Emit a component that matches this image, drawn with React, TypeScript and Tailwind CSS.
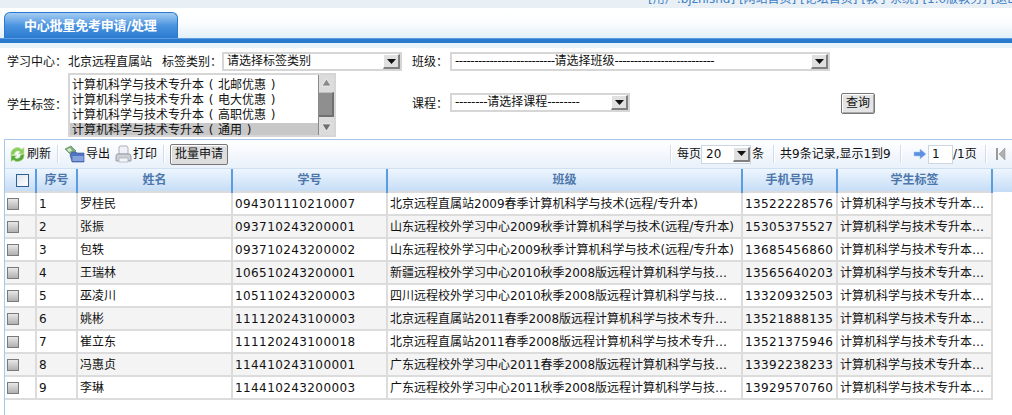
import type { ReactNode } from "react";

const font = "font-['DejaVu_Sans','Noto_Sans_CJK_SC',sans-serif]";

const rows = [
  ["1", "罗桂民", "094301110210007", "北京远程直属站2009春季计算机科学与技术(远程/专升本)", "13522228576"],
  ["2", "张振", "093710243200001", "山东远程校外学习中心2009秋季计算机科学与技术(远程/专升本)", "15305375527"],
  ["3", "包轶", "093710243200002", "山东远程校外学习中心2009秋季计算机科学与技术(远程/专升本)", "13685456860"],
  ["4", "王瑞林", "106510243200001", "新疆远程校外学习中心2010秋季2008版远程计算机科学与技术专升本", "13565640203"],
  ["5", "巫凌川", "105110243200003", "四川远程校外学习中心2010秋季2008版远程计算机科学与技术专升本", "13320932503"],
  ["6", "姚彬", "111120243100003", "北京远程直属站2011春季2008版远程计算机科学与技术专升本(远程)", "13521888135"],
  ["7", "崔立东", "111120243100018", "北京远程直属站2011春季2008版远程计算机科学与技术专升本(远程)", "13521375946"],
  ["8", "冯惠贞", "114410243100001", "广东远程校外学习中心2011春季2008版远程计算机科学与技术专升本", "13392238233"],
  ["9", "李琳", "114410243200003", "广东远程校外学习中心2011秋季2008版远程计算机科学与技术专升本", "13929570760"],
];

const headers = ["序号", "姓名", "学号", "班级", "手机号码", "学生标签"];

function Arrow() {
  return (
    <svg width="9" height="5" viewBox="0 0 9 5"><path d="M0 0h9L4.500 5z" fill="#111" /></svg>
  );
}

function Select({ w, children }: { w: string; children: ReactNode }) {
  return (
    <div className={`${w} h-[19px] flex border-2 border-[#d6d6d6] bg-white shrink-0 items-center`}>
      <span className="flex-1 pl-[3px] whitespace-nowrap overflow-hidden text-[#111]">{children}</span>
      <span className="w-[17px] h-[15px] bg-[#e0e0e0] border-t border-l border-t-white border-l-white border-b-2 border-r-2 border-b-[#808080] border-r-[#808080] flex items-center justify-center">
        <Arrow />
      </span>
    </div>
  );
}

function Sep({ className }: { className: string }) {
  return <span className={`w-px h-[18px] bg-[#d3dde8] border-r border-white box-content shrink-0 ${className}`} />;
}

function Dashes({ n }: { n: number }) {
  return <span className="tracking-[-0.5px]">{"-".repeat(n)}</span>;
}

function Paren({ c }: { c: string }) {
  return <span className="inline-block w-[14px] text-center">{c}</span>;
}

function ListItem({ name, selected }: { name: string; selected?: boolean }) {
  return (
    <div className={`pl-[2px] whitespace-nowrap ${selected ? "bg-[#c8c8c8] h-[16px]" : "h-[15px]"}`}>
      计算机科学与技术专升本<Paren c="(" />{name}<Paren c=")" />
    </div>
  );
}

function RefreshIcon() {
  return (
    <svg className="shrink-0" width="17" height="17" viewBox="0 0 17 17">
      <path d="M2 9.500A6.500 6.500 0 0 1 12.800 3.300L15 1.500V7.900H9L11.200 5.900A3.300 3.300 0 0 0 5.600 8.500Z" fill="#8ccc5c" stroke="#cfeab8" strokeWidth=".6" />
      <path d="M15 7.800A6.500 6.500 0 0 1 4.200 13.900L2 15.700V9.400H8L5.800 11.400A3.300 3.300 0 0 0 11.400 8.800Z" fill="#5aa838" stroke="#cfeab8" strokeWidth=".6" />
    </svg>
  );
}

function ExportIcon() {
  return (
    <svg className="shrink-0" width="21" height="18" viewBox="0 0 21 18">
      <path d="M1 4l6-3 5 5-5 4z" fill="#7fae7a" stroke="#4f7f50" strokeWidth=".6" />
      <path d="M3 4.500l3-1.500 2 2.500-3 1.500z" fill="#d8ecd2" />
      <path d="M6 10l2-3h4l1 1h7v9H8z" fill="#4f74c0" stroke="#3a5698" strokeWidth=".6" />
      <path d="M8.500 11h11v5h-11z" fill="#86a2dc" />
    </svg>
  );
}

function PrintIcon() {
  return (
    <svg className="shrink-0" width="17" height="18" viewBox="0 0 17 18">
      <path d="M5 1h7l1 2v6H4V2z" fill="#eef1f5" stroke="#9aa2ad" strokeWidth=".8" />
      <path d="M2 9h13l1 2v5H1v-5z" fill="#ccd1d7" stroke="#8a919a" strokeWidth=".8" />
      <path d="M4 13h9v4H4z" fill="#f4f5f6" stroke="#9aa2ad" strokeWidth=".6" />
    </svg>
  );
}

function RowCheck() {
  return <span className="block w-[12px] h-[12px] border border-[#7a7a7a] bg-gradient-to-b from-[#e8e8e8] to-[#b0b0b0]" />;
}

export default function App() {
  return (
    <div className={`${font} text-[12px] leading-[15px] text-[#111] w-[1012px] h-[415px] overflow-hidden bg-white`}>
      <div className="h-[8px] bg-[#e8f0f6] overflow-hidden relative">
        <div className="absolute left-[648px] top-[-8px] whitespace-nowrap text-[#3f7fc4]">[用户:bjzhlshd] [网站首页] [论坛首页] [教学系统] [1.0版教务] [退出]</div>
      </div>
      <div className="h-[30px] pl-[4px] flex items-end bg-gradient-to-b from-white via-[#fbfdfe] to-[#e2f0f9]">
        <div className="w-[174px] h-[26px] rounded-t-[6px] border border-b-0 border-[#2a7bd0] bg-gradient-to-b from-[#a6cdf2] via-[#4a94e0] to-[#2a7bd0] flex items-center pl-[19px] font-bold text-[13px] tracking-[-0.2px] whitespace-nowrap text-white">
          中心批量免考申请/处理
        </div>
      </div>
      <div className="h-[5px] bg-[#2a7bd0] border-t border-[#5b9be0]" />
      <div className="h-[5px] bg-[#e8f3fa]" />

      <div className="h-[91px] pt-[4px] pl-[7px]">
        <div className="flex items-center h-[19px]">
          <span className="w-[61px] pt-[1px] shrink-0">学习中心：</span>
          <span className="w-[94px] pt-[1px] shrink-0">北京远程直属站</span>
          <span className="w-[60px] pt-[1px] shrink-0">标签类别：</span>
          <Select w="w-[180px]">请选择标签类别</Select>
          <span className="ml-[10px] w-[38px] pt-[1px] shrink-0">班级：</span>
          <Select w="w-[380px]"><Dashes n={26} />请选择班级<Dashes n={26} /></Select>
        </div>
        <div className="flex items-start mt-[2px]">
          <span className="w-[61px] mt-[25px] shrink-0">学生标签：</span>
          <div className="w-[268px] h-[64px] border-2 border-[#d6d6d6] bg-white flex overflow-hidden shrink-0">
            <div className="flex-1 pt-[3px] overflow-hidden">
              <ListItem name="北邮优惠" />
              <ListItem name="电大优惠" />
              <ListItem name="高职优惠" />
              <ListItem name="通用" selected />
            </div>
            <div className="w-[16px] bg-[#dcdcdc] border-l border-[#8a8a8a] flex flex-col items-center">
              <svg width="15" height="15" viewBox="0 0 15 15"><path d="M7.500 4l4.500 7H3z" fill="#8a8a8a" stroke="#fff" strokeWidth=".6" /></svg>
              <div className="w-[15px] h-[25px] mt-[2px] bg-[#8f8f8f] border-t border-r-2 border-b-2 border-t-[#c0c0c0] border-r-[#707070] border-b-[#707070]" />
              <div className="flex-1" />
              <svg width="15" height="15" viewBox="0 0 15 15"><path d="M7.500 11L3 4h9z" fill="#6f6f6f" stroke="#fff" strokeWidth=".6" /></svg>
            </div>
          </div>
          <span className="ml-[76px] w-[38px] mt-[24px] shrink-0">课程：</span>
          <div className="mt-[20px] shrink-0">
            <Select w="w-[180px]"><span className="tracking-[-0.3px]">--------</span>请选择课程<span className="tracking-[-0.3px]">--------</span></Select>
          </div>
          <button className="ml-[211px] mt-[20px] w-[34px] h-[21px] bg-[#e4e4e4] border border-[#777] rounded-[2px] shadow-[inset_1px_1px_0_#fff,inset_-1px_-1px_0_#aaa] text-[#111] text-[12px] shrink-0">查询</button>
        </div>
      </div>

      <div className="ml-[4px] w-[1008px] border-t border-l border-[#a9c7e6] h-[276px]">
        <div className="h-[29px] flex items-center pl-[4px] whitespace-nowrap bg-gradient-to-b from-white to-[#e9f1fa] border-b border-[#cfe0f2]">
          <RefreshIcon />
          <span className="ml-[1px] w-[24px] shrink-0">刷新</span>
          <Sep className="ml-[6px] mr-[5px]" />
          <ExportIcon />
          <span className="ml-[1px] w-[24px] shrink-0">导出</span>
          <span className="ml-[5px] flex items-center shrink-0"><PrintIcon /></span>
          <span className="ml-[1px] w-[24px] shrink-0">打印</span>
          <Sep className="ml-[6px] mr-[5px]" />
          <button className="h-[21px] w-[58px] bg-[#dedede] border border-[#777] rounded-[2px] shadow-[inset_1px_1px_0_#fff] text-[12px] text-[#111] shrink-0">批量申请</button>
          <Sep className="ml-[442px] mr-[5px]" />
          <span className="w-[24px] shrink-0">每页</span>
          <div className="w-[50px] h-[19px] border border-[#ccd6e0] bg-white flex items-center shrink-0">
            <span className="flex-1 pl-[4px]">20</span>
            <span className="w-[17px] h-[15px] bg-[#e0e0e0] border-t border-l border-t-white border-l-white border-b-2 border-r-2 border-b-[#808080] border-r-[#808080] flex items-center justify-center"><Arrow /></span>
          </div>
          <span className="ml-[1px] w-[12px] shrink-0">条</span>
          <Sep className="ml-[9px] mr-[5px]" />
          <span className="w-[120px] shrink-0">共9条记录,显示1到9</span>
          <Sep className="mr-[11px]" />
          <svg className="shrink-0" width="14" height="12" viewBox="0 0 14 12"><path d="M1 4h6V1l6 5-6 5V8H1z" fill="#5b8fe0" stroke="#a8c4ee" strokeWidth=".6" /></svg>
          <div className="ml-[1px] w-[25px] h-[19px] border border-[#ccd6e0] bg-white pl-[3px] leading-[17px] shrink-0">1</div>
          <span className="w-[23px] shrink-0">/1页</span>
          <Sep className="ml-[9px] mr-[8px]" />
          <svg className="shrink-0" width="12" height="14" viewBox="0 0 12 14"><path d="M1 1h2v12H1z" fill="#9a9a9a" /><path d="M10 1v12L4 7z" fill="#b0b0b0" stroke="#8a8a8a" strokeWidth=".5" /></svg>
        </div>

        <table className="table-fixed border-collapse w-[1007px]">
          <colgroup>
            <col className="w-[31px]" />
            <col className="w-[41px]" />
            <col className="w-[155px]" />
            <col className="w-[155px]" />
            <col className="w-[355px]" />
            <col className="w-[95px]" />
            <col className="w-[155px]" />
            <col className="w-[20px]" />
          </colgroup>
          <thead>
            <tr className="h-[23px] bg-gradient-to-b from-[#eef6fe] to-[#c4dcf6]">
              <th className="p-0 border-r-2 border-r-[#5b9be0]">
                <span className="block ml-[11px] w-[13px] h-[13px] border border-[#2f5f8f] bg-gradient-to-br from-[#dfe6ee] to-white" />
              </th>
              {headers.map((h) => (
                <th key={h} className="p-0 font-bold text-[#4d77ab] text-center whitespace-nowrap border-r-2 border-r-[#5b9be0]">{h}</th>
              ))}
              <th className="p-0" />
            </tr>
          </thead>
          <tbody>
            {rows.map((r, i) => (
              <tr key={r[0]} className={`h-[23px] ${i % 2 ? "bg-[#f4f4f4]" : "bg-white"}`}>
                <td className="p-0 pl-[2px] border-2 border-l-0 border-[#dcdcdc]"><RowCheck /></td>
                {r.map((c, j) => (
                  <td key={j} className={`p-0 pt-[2px] pl-[2px] border-2 border-[#dcdcdc] whitespace-nowrap overflow-hidden text-ellipsis ${j === 2 || j === 4 ? "tracking-[0.4px]" : ""} ${j === 3 ? "pr-[4px]" : ""}`}>{c}</td>
                ))}
                <td className="p-0 pt-[2px] pl-[2px] border-2 border-[#dcdcdc] whitespace-nowrap overflow-hidden text-ellipsis">计算机科学与技术专升本（通用）</td>
                <td className="p-0 bg-white" />
              </tr>
            ))}
          </tbody>
        </table>
      </div>
    </div>
  );
}
